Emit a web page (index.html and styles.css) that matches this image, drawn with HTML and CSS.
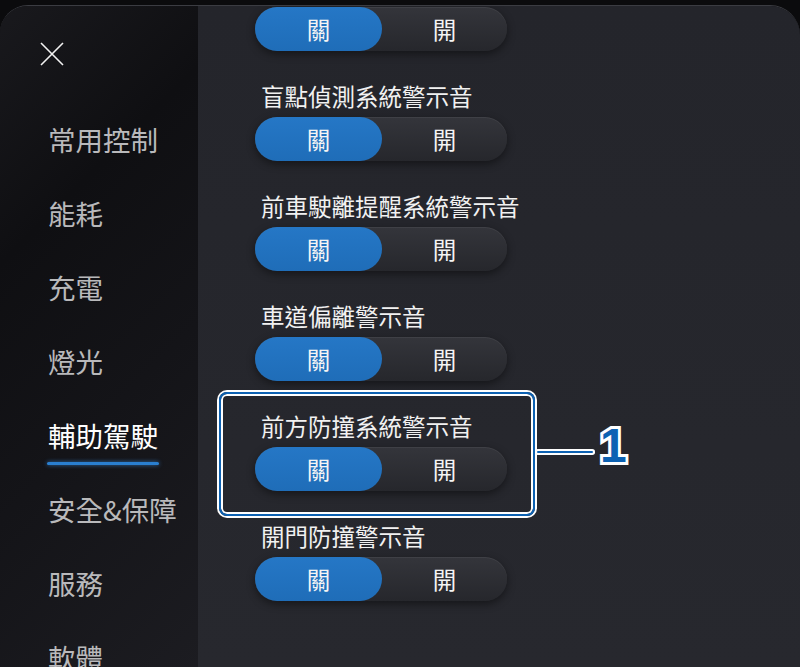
FILE: index.html
```html
<!DOCTYPE html>
<html lang="zh-Hant">

<head>
    <meta charset="UTF-8">
    <meta name="viewport" content="width=device-width, initial-scale=1.0">
    <title>輔助駕駛</title>
    <link rel="stylesheet" href="styles.css">
</head>

<body>
    <div class="panel">
        <!-- 左側選單 -->
        <aside class="side">
            <div class="close">
                <svg width="24" height="24" viewBox="0 0 24 24">
                    <path d="M1 1L23 23M23 1L1 23" stroke="#f2f2f2" stroke-width="1.6" fill="none" />
                </svg>
            </div>
            <ul class="menu">
                <li>常用控制</li>
                <li>能耗</li>
                <li>充電</li>
                <li>燈光</li>
                <li class="on">輔助駕駛</li>
                <li>安全&amp;保障</li>
                <li>服務</li>
                <li>軟體</li>
            </ul>
        </aside>

        <!-- 右側設定（已往下捲動） -->
        <section class="main">
            <ul class="list">
                <li class="first">
                    <div class="switch"><span class="off">關</span><span>開</span></div>
                </li>
                <li>
                    <p class="name">盲點偵測系統警示音</p>
                    <div class="switch"><span class="off">關</span><span>開</span></div>
                </li>
                <li>
                    <p class="name">前車駛離提醒系統警示音</p>
                    <div class="switch"><span class="off">關</span><span>開</span></div>
                </li>
                <li>
                    <p class="name">車道偏離警示音</p>
                    <div class="switch"><span class="off">關</span><span>開</span></div>
                </li>
                <li>
                    <p class="name">前方防撞系統警示音</p>
                    <div class="switch"><span class="off">關</span><span>開</span></div>
                </li>
                <li>
                    <p class="name">開門防撞警示音</p>
                    <div class="switch"><span class="off">關</span><span>開</span></div>
                </li>
            </ul>

            <!-- 標註框 -->
            <div class="mark">
                <div class="line"></div>
                <strong class="num">1</strong>
            </div>
        </section>
    </div>
</body>

</html>
```

FILE: styles.css
```css
body {
    margin: 0;
    background: #0b0b0d;
    font-family: "Noto Sans CJK TC", "Noto Sans", sans-serif;
}

ul,
p {
    margin: 0;
    padding: 0;
    list-style: none;
}

.panel {
    display: flex;
    height: 662px;
    margin-top: 5px;
    border-radius: 28px 30px 0 0;
    border-top: 1px solid #3b3c42;
    overflow: hidden;
}

.side {
    width: 198px;
    flex-shrink: 0;
    background: linear-gradient(135deg, #19191d 0%, #0f0f12 30%, #141418 60%, #1c1c21 100%);
}

.close {
    padding: 36px 0 0 40px;
    height: 24px;
}

.menu {
    padding: 53px 0 0 48px;
}

.menu li {
    height: 74px;
    font-size: 27.5px;
    line-height: 40px;
    color: #b9b9bb;
}

.menu .on {
    color: #fff;
}

.menu .on::after {
    content: "";
    display: block;
    width: 112px;
    height: 3px;
    margin: 7px 0 0 -1px;
    border-radius: 2px;
    background: #2a7fd0;
    box-shadow: 0 0 4px rgba(60, 150, 240, 0.7);
}

.main {
    flex: 1;
    position: relative;
    background: linear-gradient(180deg, #24252b 0%, #27282e 100%);
}

.list {
    padding-left: 57px;
}

.list li {
    height: 110px;
}

.list .first {
    height: 73px;
}

.name {
    height: 32px;
    margin-left: 6px;
    font-size: 23.5px;
    line-height: 32px;
    color: #f1f1f1;
}

.switch {
    display: flex;
    width: 252px;
    height: 44px;
    margin-top: 5px;
    border-radius: 22px;
    background: linear-gradient(180deg, #34353b 0%, #26272c 100%);
    box-shadow: 0 3px 8px rgba(0, 0, 0, 0.45), inset 0 1px 0 rgba(255, 255, 255, 0.06);
}

.first .switch {
    margin-top: 1px;
}

.switch span {
    flex: 1;
    font-size: 23.5px;
    line-height: 44px;
    text-align: center;
    color: #f4f4f4;
}

.switch .off {
    flex: 0 0 127px;
    border-radius: 22px;
    background: linear-gradient(180deg, #2577c6 0%, #1f6db8 100%);
}

.mark {
    position: absolute;
    left: 21px;
    top: 386px;
    width: 312px;
    height: 120px;
    border: 2px solid #0d62b3;
    border-radius: 8px;
    box-shadow: 0 0 0 2px #fff, inset 0 0 0 2px #fff;
}

.line {
    position: absolute;
    left: 316px;
    top: 57px;
    width: 56px;
    height: 2px;
    background: #0d62b3;
    border-radius: 2px;
    box-shadow: 0 0 0 2px #fff;
}

.num {
    position: absolute;
    left: 379px;
    top: 22px;
    font-family: "Liberation Sans", sans-serif;
    font-size: 48px;
    font-weight: bold;
    line-height: 60px;
    color: #0d62b3;
    -webkit-text-stroke: 6px #fff;
    paint-order: stroke fill;
}
```
